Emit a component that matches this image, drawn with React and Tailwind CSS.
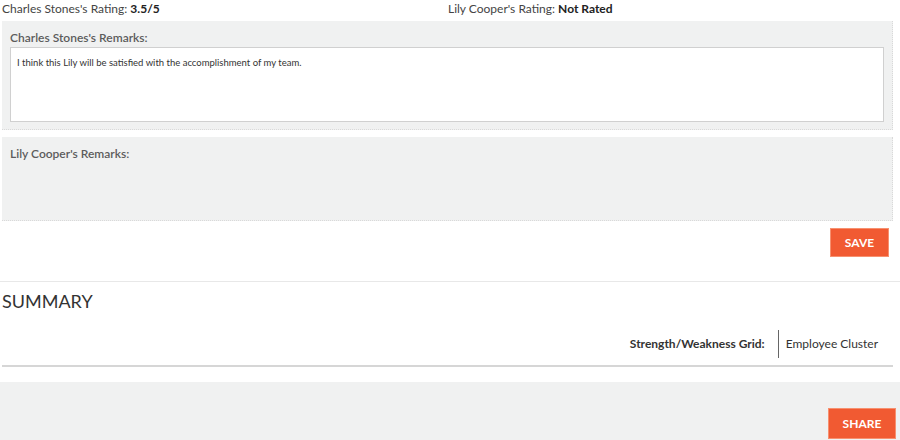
export default function App() {
  return (
    <div className="w-[900px] h-[440px] overflow-hidden bg-white text-[#333]" style={{ fontFamily: "Lato, 'Open Sans', sans-serif" }}>
      <div className="flex h-[21px] items-start pt-[3px] px-[2px] text-[12px] leading-[12px]">
        <div className="w-[446px]">
          <span className="text-[#444]">Charles Stones's Rating: </span>
          <span className="font-bold text-[#222]">3.5/5</span>
        </div>
        <div>
          <span className="text-[#444]">Lily Cooper's Rating: </span>
          <span className="font-bold text-[#222]">Not Rated</span>
        </div>
      </div>

      <div className="ml-[2px] w-[891px] bg-[#f0f1f1] border-r border-b border-dotted border-[#d9d9d9] px-[8px] pt-[10px] pb-[7px]">
        <div className="text-[12px] leading-[14px] font-semibold text-[#5c5c5c] mb-[2px]">Charles Stones's Remarks:</div>
        <div className="h-[75px] bg-white border border-[#d0d0d0] px-[6px] pt-[9px] text-[9.5px] leading-[12px] text-[#333]">
          I think this Lily will be satisfied with the accomplishment of my team.
        </div>
      </div>

      <div className="ml-[2px] mt-[7px] w-[891px] h-[84px] bg-[#f0f1f1] border-r border-b border-dotted border-[#d9d9d9] px-[8px] pt-[10px]">
        <div className="text-[12px] leading-[14px] font-semibold text-[#5c5c5c]">Lily Cooper's Remarks:</div>
      </div>

      <div className="flex justify-end pr-[11px] pt-[7px]">
        <button className="w-[59px] h-[29px] bg-[#f15a32] border border-[#f7906f] text-white text-[12px] font-bold">SAVE</button>
      </div>

      <div className="mt-[24px] h-px bg-[#e8e8e8]"></div>

      <div className="px-[2px] pt-[9px] text-[18px] leading-[20px] text-[#333]">SUMMARY</div>

      <div className="ml-[2px] w-[891px] mt-[19px] flex justify-end items-center h-[28px]">
        <div className="text-[12px] font-bold text-[#333] pr-[13px]">Strength/Weakness Grid:</div>
        <div className="w-px h-[28px] bg-[#666]"></div>
        <div className="text-[12px] text-[#333] pl-[7px] pr-[15px]">Employee Cluster</div>
      </div>

      <div className="ml-[2px] w-[891px] mt-[7px] h-[2px] bg-[#d6d6d6]"></div>

      <div className="mt-[15px] h-[60px] bg-[#f0f1f1] flex justify-end items-start pr-[4px] pt-[26px]">
        <button className="w-[68px] h-[31px] bg-[#f15a32] border border-[#f7906f] text-white text-[12px] font-bold">SHARE</button>
      </div>
    </div>
  );
}
